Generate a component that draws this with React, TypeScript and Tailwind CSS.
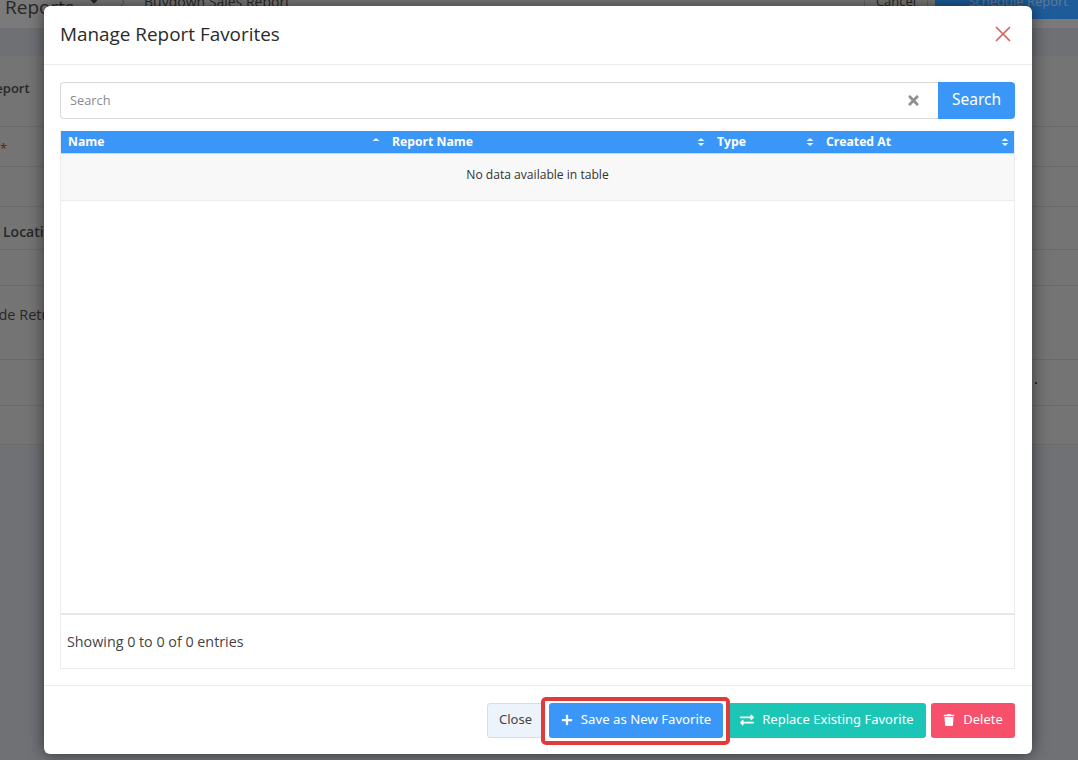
import { FaExchangeAlt, FaPlus, FaTimes, FaTrash } from 'react-icons/fa';

const COLUMNS = [
  { label: 'Name', width: 'w-[324px]', sorted: true },
  { label: 'Report Name', width: 'w-[325px]', sorted: false },
  { label: 'Type', width: 'w-[109px]', sorted: false },
  { label: 'Created At', width: 'flex-1', sorted: false },
];

function SortIcon({ sorted }: { sorted: boolean }) {
  return (
    <svg width="8" height="10" viewBox="0 0 8 10" className="shrink-0">
      <path d="M4 1 L7.5 4 H0.5 Z" fill="#e4f1ff" />
      {!sorted && <path d="M4 9 L7.5 6 H0.5 Z" fill="#e4f1ff" />}
    </svg>
  );
}

function BackgroundPage() {
  return (
    <div className="h-[760px] overflow-hidden bg-[#b9bcc3] text-[#444] [font-family:'Open_Sans',sans-serif]">
      <div className="flex h-[28px] bg-[#cbcbcb]">
        <div className="flex h-[18px] items-end">
          <span className="ml-[5px] translate-y-[3px] text-[19px] leading-[28px]">Reports</span>
          <svg width="12" height="8" viewBox="0 0 12 8" className="ml-[14px] -translate-y-[14px]">
            <path d="M1 1 L6 6 L11 1" stroke="#444" strokeWidth="2.4" fill="none" />
          </svg>
          <svg width="6" height="10" viewBox="0 0 6 10" className="ml-[19px] -translate-y-[11px]">
            <path d="M1 0 L5 5 L1 10" stroke="#888" strokeWidth="1" fill="none" />
          </svg>
          <span className="ml-[19px] translate-y-[-6px] text-[14px] leading-[20px]">Buydown Sales Report</span>
        </div>
        <div className="ml-auto flex h-[19px] items-start text-[13px]">
          <span className="flex h-[19px] w-[64px] justify-center rounded-b border border-t-0 border-[#aaa]">
            <span className="-translate-y-[6px] leading-[14px]">Cancel</span>
          </span>
          <span className="ml-[7px] flex h-[19px] w-[143px] justify-end rounded-bl bg-[#3299ff] pr-[10px] text-[#a0d0ff]">
            <span className="-translate-y-[6px] leading-[14px]">Schedule Report</span>
          </span>
        </div>
      </div>
      <div className="h-[28px] bg-[#b7bbc1]" />
      <div className="flex h-[71px] items-start border-b border-[#b1b1b1] bg-[#c1c1c1] pt-[23px] text-[13px] font-semibold leading-[18px]">
        <span className="-ml-[13px]">Report</span>
      </div>
      <div className="h-[40px] border-b border-[#b1b1b1] bg-[#c1c1c1] pt-[12px] text-[13px] leading-[18px] text-[#c02020]">
        *
      </div>
      <div className="h-[40px] border-b border-[#b1b1b1] bg-[#c1c1c1]" />
      <div className="h-[43px] border-b border-[#b1b1b1] bg-[#c1c1c1] pt-[15px] text-[14px] font-semibold leading-[20px]">
        <span className="ml-[3px]">Location</span>
      </div>
      <div className="h-[36px] border-b border-[#b1b1b1] bg-[#c1c1c1]" />
      <div className="flex h-[74px] items-start border-b border-[#b1b1b1] bg-[#c1c1c1] pt-[19px] text-[14.5px] leading-[20px]">
        <span className="-ml-[34px]">Include Returns</span>
      </div>
      <div className="flex h-[46px] items-center justify-end border-b border-[#b1b1b1] bg-[#c1c1c1] pr-[41px]">
        <span className="size-[2px] rounded-full bg-[#222]" />
      </div>
      <div className="h-[39px] border-b border-[#b1b1b1] bg-[#c1c1c1]" />
    </div>
  );
}

export default function App() {
  return (
    <div className="relative h-[760px] w-[1078px] overflow-hidden">
      <BackgroundPage />
      <div className="absolute inset-0 bg-black/40" />

      {/* Manage favorites modal */}
      <div className="absolute left-[44px] top-[6px] flex h-[748px] w-[988px] flex-col rounded-[6px] bg-white text-[#333] shadow-[0_0_16px_rgba(0,0,0,0.55)] [font-family:'Open_Sans',sans-serif]">
        <div className="flex h-[59px] shrink-0 items-center justify-between border-b border-[#e9ecef] pb-[2px] pl-4 pr-[21px]">
          <h2 className="text-[18.9px] leading-[26px] text-[#2b2b2b]">Manage Report Favorites</h2>
          <svg width="16" height="16" viewBox="0 0 16 16" className="text-[#d8625e]">
            <path d="M1 1 L15 15 M15 1 L1 15" stroke="currentColor" strokeWidth="1.7" fill="none" />
          </svg>
        </div>

        <div className="flex min-h-0 flex-1 flex-col pl-4 pr-[17px] pt-[17px]">
          <div className="flex h-[37px] shrink-0">
            <div className="flex flex-1 items-center justify-between rounded-l-[4px] border border-r-0 border-[#d9d9d9] pl-[9px] pr-[17px]">
              <span className="text-[12.8px] text-[#8a8a8a]">Search</span>
              <FaTimes size={15} className="text-[#8f8f8f]" />
            </div>
            <button className="w-[77px] rounded-r-[4px] bg-[#3a97f8] pb-[2px] text-[15.5px] text-white [font-family:'Noto_Sans',sans-serif]">
              Search
            </button>
          </div>

          <div className="mt-[12px] flex min-h-0 flex-1 flex-col border-x border-[#ececec]">
            <div className="flex h-[23px] shrink-0 border-b border-[#bcdcfb] bg-[#3a97f8] text-[12.2px] font-bold text-white">
              {COLUMNS.map((col) => (
                <div key={col.label} className={`${col.width} flex items-center justify-between pl-[7px] pr-[5px]`}>
                  <span>{col.label}</span>
                  <SortIcon sorted={col.sorted} />
                </div>
              ))}
            </div>
            <div className="flex h-[47px] shrink-0 items-center justify-center border-b border-[#ececec] bg-[#f8f8f8] pb-[4px] text-[12.1px]">
              No data available in table
            </div>
            <div className="flex-1 border-b-2 border-[#e8e8e8]" />
            <div className="flex h-[54px] shrink-0 items-center border-b border-[#ececec] pl-[6px] text-[14.3px] text-[#444]">
              Showing 0 to 0 of 0 entries
            </div>
          </div>
        </div>

        <div className="mt-[16px] flex h-[69px] shrink-0 items-center justify-end gap-[5px] border-t border-[#e9ecef] pl-4 pr-[17px] text-[13px] [font-family:'Noto_Sans',sans-serif]">
          <button className="h-[35px] w-[57px] rounded-[3px] border border-[#d5dde5] bg-[#edf3fa] text-[#444]">Close</button>
          {/* red annotation frame round the button */}
          <div className="relative z-10">
            <div className="absolute -bottom-[7px] -left-[8px] -right-[7px] -top-[6px] rounded-[5px] border-[4px] border-[#e03a3a] bg-white" />
            <button className="relative flex h-[35px] w-[174px] items-center justify-center gap-[8px] rounded-[3px] bg-[#3a97f8] text-[13.2px] text-white">
              <FaPlus size={12} />
              Save as New Favorite
            </button>
          </div>
          <button className="flex h-[35px] w-[198px] items-center justify-center gap-[8px] rounded-[3px] bg-[#1cc6b6] text-white">
            <FaExchangeAlt size={14} />
            Replace Existing Favorite
          </button>
          <button className="flex h-[35px] w-[84px] items-center justify-center gap-[8px] rounded-[3px] bg-[#f7506a] text-white">
            <FaTrash size={12} />
            Delete
          </button>
        </div>
      </div>
    </div>
  );
}
